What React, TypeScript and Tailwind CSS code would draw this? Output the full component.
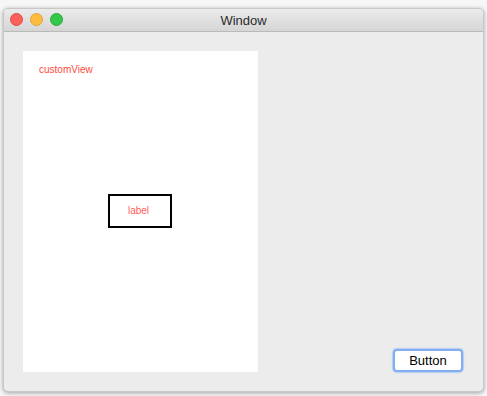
export default function App() {
  return (
    <div className="w-[487px] h-[396px] bg-[#f6f6f6] pt-[8px] pl-[3px] pr-[3px] pb-[4px]" style={{ fontFamily: '"Helvetica Neue", "Liberation Sans", Arial, sans-serif' }}>
      <div className="w-full h-full flex flex-col rounded-[5px] overflow-hidden border border-[#c8c8c8] shadow-[0_1px_4px_rgba(0,0,0,0.35)] bg-[#ececec]">
        <div className="relative h-[23px] shrink-0 flex items-center justify-center bg-gradient-to-b from-[#ebebeb] to-[#d5d5d5] border-b border-[#b9b9b9]">
          <div className="absolute left-[6px] top-[4px] flex gap-[7px]">
            <div className="w-[13px] h-[13px] rounded-full bg-[#fc605b] border border-[#de4a45]" />
            <div className="w-[13px] h-[13px] rounded-full bg-[#fdbc40] border border-[#dea236]" />
            <div className="w-[13px] h-[13px] rounded-full bg-[#34c84a] border border-[#27aa35]" />
          </div>
          <span className="text-[13px] text-[#2b2b2b] leading-none">Window</span>
        </div>
        <div className="flex-1 flex pl-[19px] pt-[19px] pb-[19px] pr-[20px]">
          <div className="relative w-[235px] h-full bg-white flex items-center justify-center">
            <span className="absolute left-[16px] top-[11px] text-[10px] text-[#ff4a3d]">customView</span>
            <div className="w-[64px] h-[34px] mb-[2px] -ml-[1px] border-2 border-black flex items-center justify-center">
              <span className="text-[10px] text-[#ff5a55] -ml-[3px]">label</span>
            </div>
          </div>
          <div className="flex-1 flex items-end justify-end">
            <button className="w-[70px] h-[23px] rounded-[4px] bg-white border-[2.5px] border-[#82aff3] shadow-[0_0_1px_1px_rgba(130,175,243,0.5)] text-[13px] text-black leading-none">Button</button>
          </div>
        </div>
      </div>
    </div>
  );
}
